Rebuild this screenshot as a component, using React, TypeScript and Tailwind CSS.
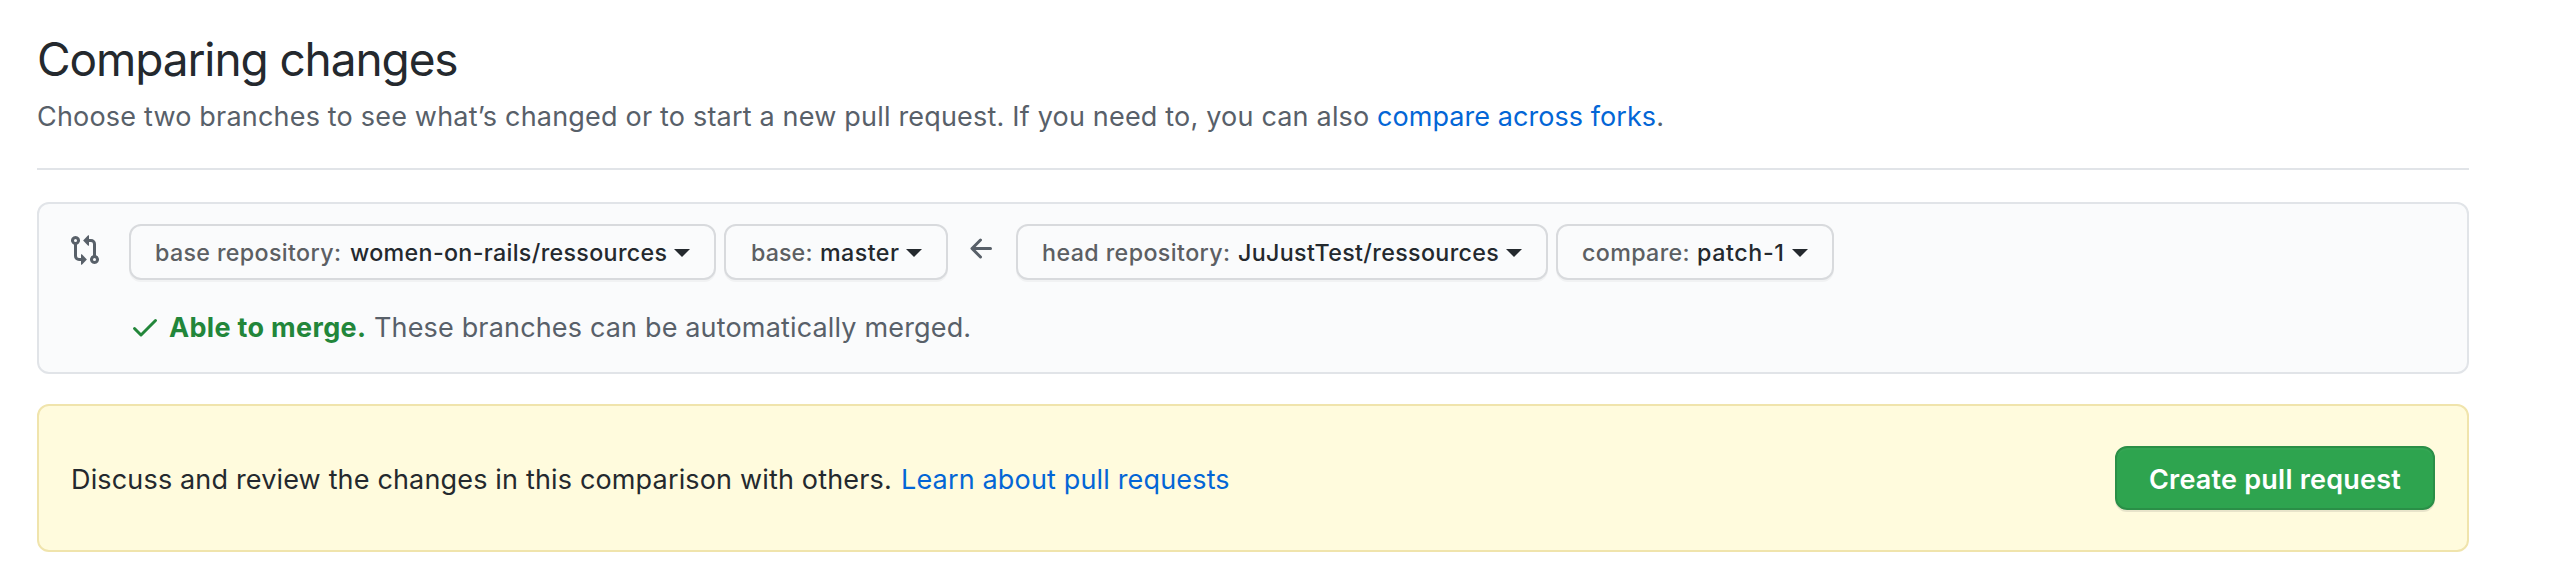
function SelectButton({ label, value, className, labelClass, valueClass }: { label: string; value: string; className: string; labelClass: string; valueClass: string }) {
  return (
    <button
      className={`flex h-14 shrink-0 items-center whitespace-nowrap rounded-xl border-2 border-[#d8dadd] bg-[#fafbfc] pl-6 pt-0.5 text-left text-[23.25px] font-medium leading-10 text-[#24292e] shadow-[0_2px_0_rgba(27,31,35,0.04)] ${className}`}
    >
      <span className={`text-[#5c5f63] ${labelClass}`}>{label}</span>
      <span className={valueClass}>{value}</span>
      <svg className="ml-1.5 h-2 w-4 shrink-0" viewBox="0 0 16 8" fill="currentColor">
        <path d="M0 0h16L8 8z" />
      </svg>
    </button>
  );
}

export default function App() {
  return (
    <div className="flex h-[574px] w-[2558px] flex-col overflow-hidden bg-white pl-[37px] pr-[89px] font-['Inter',sans-serif] text-[27px] text-[#24292e]">
      <header className="flex h-[170px] shrink-0 flex-col border-b-2 border-[#e1e4e8] pt-[23px]">
        <h1 className="h-[72px] whitespace-nowrap text-[46px] font-normal leading-[72px] tracking-[-1.1px]">Comparing changes</h1>
        <p className="mt-0.5 h-10 whitespace-nowrap leading-10 text-[#586069]">
          <span className="tracking-[0.19px]">Choose two branches to see what’s changed or to start a new pull request. If you need to, you can also</span>{" "}
          <a className="tracking-[0.06px] text-[#0366d6]">compare across forks</a>.
        </p>
      </header>

      <section className="mt-8 flex h-[172px] shrink-0 rounded-xl border-2 border-[#e1e4e8] bg-[#fafbfc] pl-[30px] pt-5">
        <svg className="mt-[10px] h-8 w-8 shrink-0 text-[#586069]" viewBox="0 0 16 16" fill="currentColor">
          <path fillRule="evenodd" d="M9.573.677L7.177 3.073a.25.25 0 000 .354l2.396 2.396A.25.25 0 0010 5.646V4h1a1 1 0 011 1v5.628a2.251 2.251 0 101.5 0V5A2.5 2.5 0 0011 2.5h-1V.854a.25.25 0 00-.427-.177zM6 12v-1.646a.25.25 0 01.427-.177l2.396 2.396a.25.25 0 010 .354l-2.396 2.396A.25.25 0 016 15.146V13.5H5A2.5 2.5 0 012.5 11V5.372a2.25 2.25 0 111.5 0V11a1 1 0 001 1h1zm6.75 0a.75.75 0 100 1.5.75.75 0 000-1.5zM4 3.25a.75.75 0 11-1.5 0 .75.75 0 011.5 0z" />
        </svg>
        <div className="ml-7 flex flex-col">
          <div className="flex">
            <SelectButton label="base repository:" value="women-on-rails/ressources" className="w-[587px]" labelClass="w-[195px] tracking-[0.35px]" valueClass="w-[318px] tracking-[0.33px]" />
            <SelectButton label="base:" value="master" className="ml-2 w-56" labelClass="w-[70px] pl-px tracking-[0.1px]" valueClass="w-[80px] tracking-[0.45px]" />
            <svg className="ml-[18px] mt-[9px] h-8 w-8 shrink-0 text-[#586069]" viewBox="0 0 16 16" fill="currentColor">
              <path fillRule="evenodd" d="M7.78 12.53a.75.75 0 01-1.06 0L2.47 8.28a.75.75 0 010-1.06l4.25-4.25a.75.75 0 011.06 1.06L4.81 7h7.44a.75.75 0 010 1.5H4.81l2.97 2.97a.75.75 0 010 1.06z" />
            </svg>
            <SelectButton label="head repository:" value="JuJustTest/ressources" className="ml-[18px] w-[532px]" labelClass="w-[196px] tracking-[0.4px]" valueClass="w-[262px] tracking-[0.35px]" />
            <SelectButton label="compare:" value="patch-1" className="ml-2 w-[278px]" labelClass="w-[115px] tracking-[0.35px]" valueClass="w-[89px] tracking-[0.6px]" />
          </div>
          <div className="mt-[27px] flex h-10 items-start whitespace-nowrap leading-[42px]">
            <svg className="mt-1 h-8 w-8 shrink-0 text-[#22863a]" viewBox="0 0 16 16" fill="currentColor">
              <path fillRule="evenodd" d="M13.78 4.22a.75.75 0 010 1.06l-7.25 7.25a.75.75 0 01-1.06 0L2.22 9.28a.75.75 0 011.06-1.06L6 10.94l6.72-6.72a.75.75 0 011.06 0z" />
            </svg>
            <span className="ml-2 w-[205px] font-bold tracking-[0.32px] text-[#22863a]">Able to merge.</span>
            <span className="tracking-[0.16px] text-[#586069]">These branches can be automatically merged.</span>
          </div>
        </div>
      </section>

      <section className="mt-[30px] flex h-[148px] shrink-0 items-center justify-between rounded-xl border-2 border-[#f0e4ac] bg-[#fffbdd] px-8">
        <p className="flex whitespace-nowrap pt-1 leading-10 tracking-[0.16px]">
          <span className="w-[830px]">Discuss and review the changes in this comparison with others.</span>
          <a className="text-[#0366d6]">Learn about pull requests</a>
        </p>
        <button className="flex h-16 w-80 items-center justify-center whitespace-nowrap rounded-xl border-2 border-[#2a8f47] bg-[#2ea44f] pt-1 font-semibold leading-10 tracking-[0.22px] text-white shadow-[0_2px_0_rgba(27,31,35,0.1),inset_0_2px_0_rgba(255,255,255,0.03)]">
          Create pull request
        </button>
      </section>
    </div>
  );
}
